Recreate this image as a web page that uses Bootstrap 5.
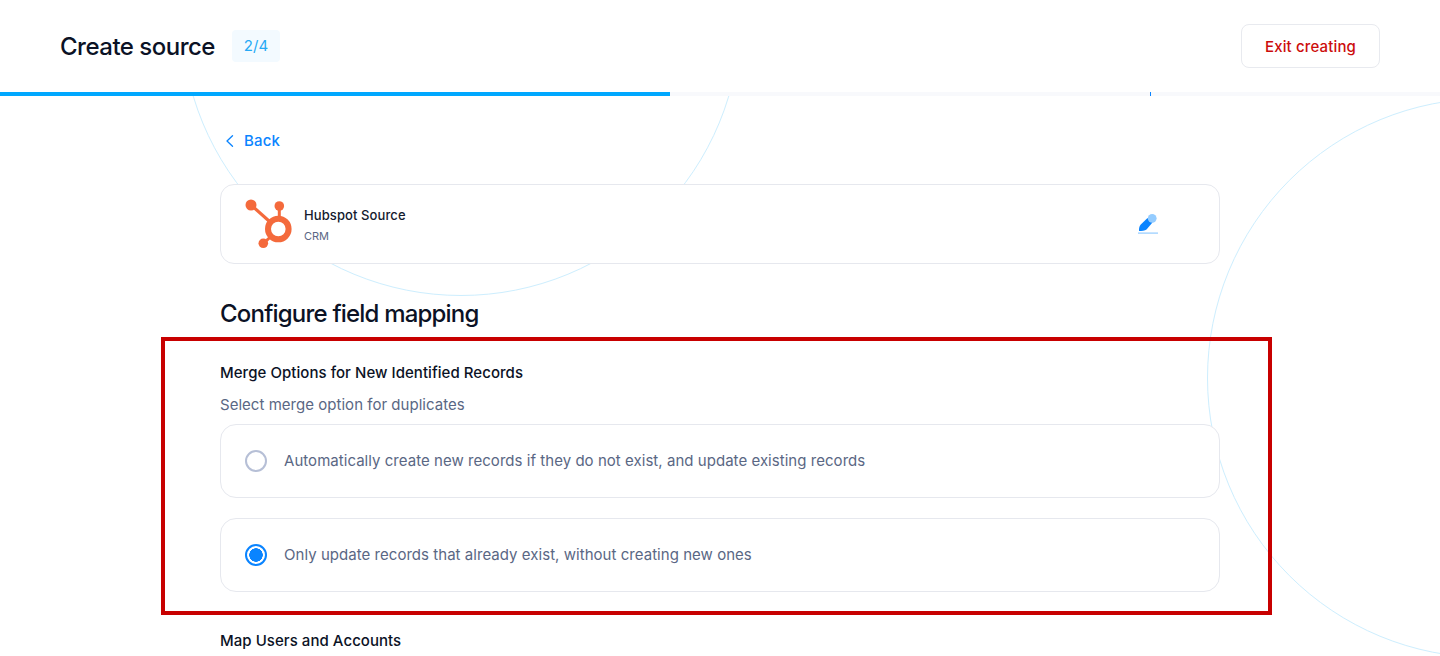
<!DOCTYPE html>
<html lang="en">
<head>
    <meta charset="UTF-8">
    <meta name="viewport" content="width=device-width, initial-scale=1.0">
    <title>Create source</title>
    <link href="https://cdn.jsdelivr.net/npm/bootstrap@5.3.0/dist/css/bootstrap.min.css" rel="stylesheet">
    <style>
        html, body {
            height: 656px;
            overflow: hidden;
        }
        body {
            font-family: "Inter", "Liberation Sans", sans-serif;
            background-color: #fff;
            color: #0b1225;
            position: relative;
        }
        /* decorative rings behind the page */
        .ring-layer {
            position: absolute;
            inset: 0;
            overflow: hidden;
        }
        .ring {
            position: absolute;
            width: 560px;
            height: 560px;
            border: 1px solid #cdeefe;
            border-radius: 50%;
        }
        .ring-left { left: 181px; top: -264px; }
        .ring-right { left: 1207px; top: 98px; }

        .top-bar {
            height: 92px;
            padding: 0 60px;
            background-color: #fff;
            position: relative;
        }
        .page-title {
            font-size: 24px;
            font-weight: 500;
            letter-spacing: -0.5px;
            margin: 0;
            padding-top: 3px;
        }
        .step-pill {
            width: 48px;
            height: 32px;
            margin-left: 17px;
            border-radius: 4px;
            background-color: #f3faff;
            color: #26a9f5;
            font-size: 15px;
        }
        .exit-btn {
            width: 139px;
            height: 44px;
            border: 1px solid #e8eaef;
            border-radius: 8px;
            background-color: #fff;
            color: #cc0c0c;
            font-size: 15px;
            font-weight: 500;
            letter-spacing: 0.15px;
            padding: 2px 0 0;
        }
        .exit-btn:hover { color: #cc0c0c; border-color: #e8eaef; }

        .step-track {
            height: 4px;
            background-color: #f8f9fc;
            position: relative;
        }
        .step-fill {
            height: 4px;
            background-color: #00a8ff;
        }
        .step-tick {
            position: absolute;
            left: 1150px;
            top: 0;
            width: 1px;
            height: 4px;
            background-color: #0a84ff;
        }

        .page-body {
            width: 1000px;
            margin-left: 220px;
            position: relative;
        }
        .back-link {
            height: 20px;
            margin-top: 35px;
            color: #0a84ff;
            font-size: 15px;
            font-weight: 500;
            letter-spacing: 0.15px;
            text-decoration: none;
        }
        .source-box {
            height: 80px;
            margin-top: 33px;
            padding: 0 60px 0 24px;
            border: 1px solid #e6e8ee;
            border-radius: 14px;
            background-color: #fff;
        }
        .source-text {
            padding-top: 2px;
        }
        .source-name {
            font-size: 13px;
            font-weight: 500;
            line-height: 16px;
            letter-spacing: 0.1px;
            color: #141a2e;
            margin-left: 11px;
        }
        .source-type {
            font-size: 11px;
            line-height: 14px;
            margin-top: 6px;
            margin-left: 11px;
            color: #5a6784;
        }
        .section-title {
            font-size: 24px;
            font-weight: 500;
            letter-spacing: -0.8px;
            line-height: 30px;
            margin: 35px 0 0;
        }
        .red-frame {
            width: 1111px;
            height: 278px;
            margin: 8px 0 0 -59px;
            padding: 22px 48px 0 55px;
            border: 4px solid #c80000;
        }
        .field-title {
            font-size: 15px;
            font-weight: 500;
            line-height: 20px;
            letter-spacing: 0.05px;
            color: #0b1225;
            margin: 0;
        }
        .field-hint {
            font-size: 15px;
            line-height: 20px;
            letter-spacing: 0.03px;
            margin-top: 12px;
            color: #5a6784;
        }
        .merge-option {
            height: 74px;
            margin: 0 0 20px;
            padding: 0 24px;
            border: 1px solid #e6e8ee;
            border-radius: 16px;
            background-color: #fff;
            color: #5a6784;
            font-size: 15px;
            letter-spacing: 0.04px;
            cursor: pointer;
        }
        .merge-option:first-of-type { margin-top: 9px; }
        .merge-option .form-check-input {
            width: 22px;
            height: 22px;
            flex: none;
            margin: 0 17px 0 0;
            border: 2px solid #b6bfd6;
            background-color: #fff;
        }
        .merge-option .form-check-input:checked {
            border-color: #0a84ff;
            background-color: #fff;
            background-image: radial-gradient(circle, #0a84ff 0, #0a84ff 6.5px, #fff 7px);
        }
        .next-title { margin-top: 16px; }
    </style>
</head>
<body>
    <div class="ring-layer">
        <div class="ring ring-left"></div>
        <div class="ring ring-right"></div>
    </div>

    <header class="top-bar d-flex align-items-center justify-content-between">
        <div class="d-flex align-items-center">
            <h1 class="page-title">Create source</h1>
            <span class="step-pill d-flex align-items-center justify-content-center">2/4</span>
        </div>
        <button type="button" class="btn exit-btn">Exit creating</button>
    </header>
    <div class="step-track">
        <div class="step-fill" style="width: 670px"></div>
        <div class="step-tick"></div>
    </div>

    <main class="page-body">
        <a href="#" class="back-link d-flex align-items-center gap-2">
            <svg width="12" height="12" viewBox="0 0 12 12" fill="none" stroke="#0a84ff" stroke-width="1.3" stroke-linecap="round" stroke-linejoin="round" class="ms-1"><path d="M8.5 .7 3 6l5.500 5.300"/></svg>
            Back
        </a>

        <div class="source-box d-flex align-items-center">
            <svg width="48" height="50" viewBox="0 0 48 50" fill="#f46a3c">
                <circle cx="6" cy="6" r="5.5"/>
                <circle cx="34.3" cy="7" r="4.8"/>
                <circle cx="18.3" cy="44.3" r="4.8"/>
                <path d="M6 6 33 30" stroke="#f46a3c" stroke-width="3.2"/>
                <path d="M34.3 7V24" stroke="#f46a3c" stroke-width="3"/>
                <path d="M18.3 44.3 31 33" stroke="#f46a3c" stroke-width="3"/>
                <circle cx="33.3" cy="30" r="10.3" fill="#fff" stroke="#f46a3c" stroke-width="6"/>
            </svg>
            <div class="source-text flex-grow-1">
                <div class="source-name">Hubspot Source</div>
                <div class="source-type">CRM</div>
            </div>
            <svg width="22" height="22" viewBox="0 0 22 22">
                <path d="M10.500 5 15.500 9.500 9.500 16.500C8 17.800 4.500 18 2 18 1.800 15 2.400 13 3.800 11.500Z" fill="#0a84ff"/>
                <circle cx="15.200" cy="5.300" r="4.400" fill="#94ccff"/>
                <rect x="1" y="19.500" width="20" height="1.200" fill="#94ccff"/>
            </svg>
        </div>

        <h2 class="section-title">Configure field mapping</h2>

        <section class="red-frame">
            <h3 class="field-title">Merge Options for New Identified Records</h3>
            <div class="field-hint">Select merge option for duplicates</div>
            <label class="merge-option d-flex align-items-center">
                <input class="form-check-input" type="radio" name="mergeOption">
                Automatically create new records if they do not exist, and update existing records
            </label>
            <label class="merge-option d-flex align-items-center">
                <input class="form-check-input" type="radio" name="mergeOption" checked>
                Only update records that already exist, without creating new ones
            </label>
        </section>

        <h3 class="field-title next-title">Map Users and Accounts</h3>
    </main>

    <script src="https://cdn.jsdelivr.net/npm/bootstrap@5.3.0/dist/js/bootstrap.bundle.min.js"></script>
</body>
</html>
